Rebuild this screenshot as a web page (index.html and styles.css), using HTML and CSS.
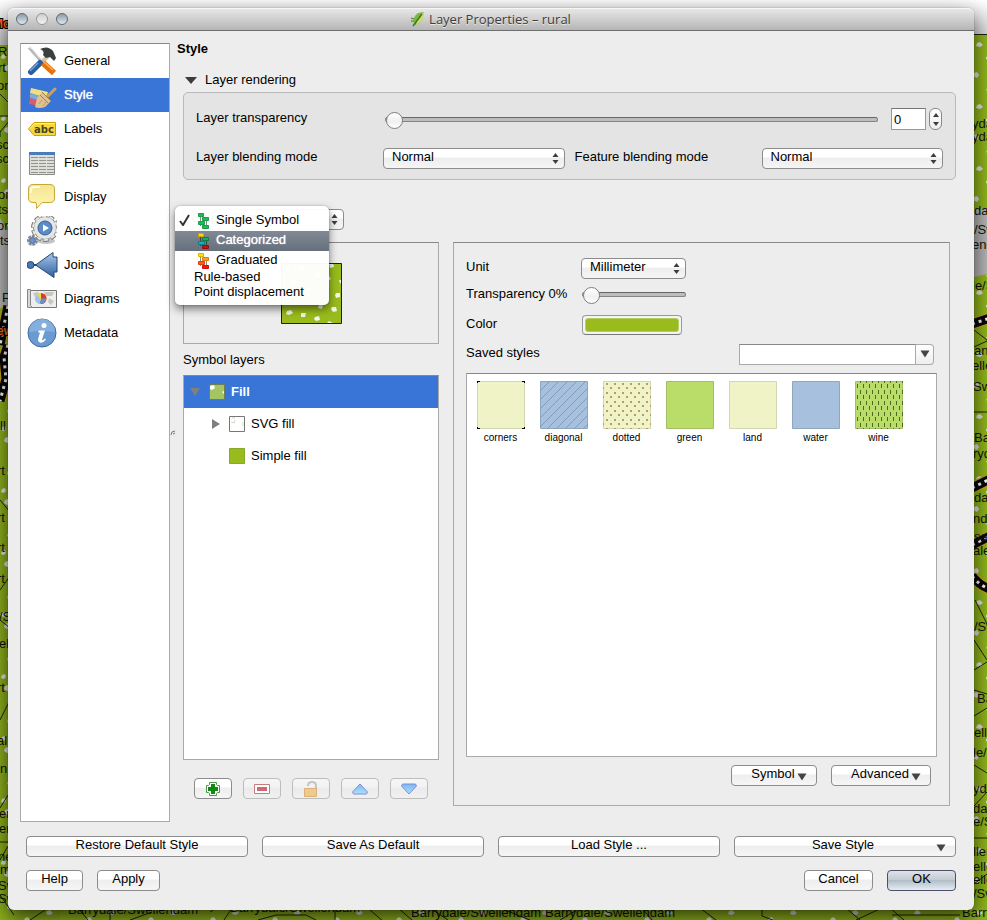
FILE: index.html
```html
<!DOCTYPE html>
<html lang="en">
<head>
<meta charset="utf-8">
<title>Layer Properties – rural</title>
<link rel="stylesheet" href="styles.css">
</head>
<body>
<svg class="map" aria-hidden="true">
  <defs>
    <linearGradient id="chrome" x1="0" y1="0" x2="0" y2="1"><stop offset="0" stop-color="#fff"/><stop offset="1" stop-color="#cfcfcf"/></linearGradient>
    <pattern id="dots" width="62" height="62" patternUnits="userSpaceOnUse">
      <g fill="#e9e9e9">
        <path d="M5 4l3-1 2 2 0 3-3 1-3-2zM26 0l3 1 1 3-3 2-3-2zM44 11l3-1 2 3-2 3-4-2zM17 18l3-1 3 2-1 3-4 0zM58 25l3 0 1 3-2 2-4-2zM33 30l4-1 2 3-3 3-3-2zM8 37l3-1 2 3-2 3-4-2zM47 43l3-1 3 3-3 2-4-1zM25 50l3-1 2 3-2 3-4-2zM56 57l3-1 2 2-2 3-3-2zM2 55l3-1 1 3-2 2-3-1z"/>
      </g>
    </pattern>
  </defs>
  <rect width="100%" height="45" fill="url(#chrome)"/>
  <rect y="45" width="60" height="100%" fill="#8fb31c"/>
  <rect x="60" y="35" width="100%" height="100%" fill="#93b91c"/>
  <rect y="45" width="60" height="100%" fill="url(#dots)"/>
  <rect x="60" y="35" width="100%" height="100%" fill="url(#dots)"/>
  <path d="M0 218l10 16v74H0zM970 210l17-2v66l-17 4z" fill="#b9b9b9"/>
  <g fill="none" stroke="#1c2308">
    <path d="M960 34.500H987M0 116h10M0 132l10-12M0 94l10 10M0 500l10 12M0 590l10-14M0 620l10 8M0 720l10-20M0 808l10-16M0 842h10M0 860l8-14M0 895l14 20M974 347l13-6M974 412h13M974 330l13 10M974 640l13 20M974 670l13-8M974 690l13 4M974 716l13-8M974 765l13 8M974 806l13-14M974 838h13M974 884l13-10M975 600l12 24"/>
    <path d="M30 920l18-12M78 908l10 12M110 908v12M130 920l22-8M210 912l6-4M224 920l8-12M258 920l18-5h30l10 5M335 906v14M370 910l14 12M412 920l-14-12M430 908l18 12M500 908l30 12M560 920l20-12M640 906l12 14M700 908l16 12M762 908v8l16 6M846 908l14 12M856 920l30-14M890 908l14 12M892 915h68"/>
  </g>
  <g fill="none">
    <path d="M8 306L3 330 0 345M8 345l-4 12 2 22-6 22M972 324l18-6M972 488l18-9M972 545l18-9M972 576q8 10 18 13" stroke="#d9a41c" stroke-width="11"/>
    <path d="M8 306L3 330 0 345M8 345l-4 12 2 22-6 22M972 324l18-6M972 488l18-9M972 545l18-9M972 576q8 10 18 13" stroke="#080808" stroke-width="9"/>
    <path d="M8 306L3 330 0 345M8 345l-4 12 2 22-6 22M972 324l18-6M972 488l18-9M972 545l18-9M972 576q8 10 18 13" stroke="#fff" stroke-width="3" stroke-dasharray="3 4"/>
  </g>
  <g class="map-label">
    <text x="-2" y="56">Ro</text><text x="-2" y="72">rt</text><text x="-3" y="90">on</text><text x="-6" y="137">n</text><text x="-4" y="149">sc</text><text x="-4" y="163">sc</text><text x="-2" y="199">or</text><text x="-2" y="214">ts</text><text x="-3" y="230">on</text><text x="0" y="245">ts</text><text x="2" y="302">Pl</text>
    <text x="0" y="430">ll</text><text x="-3" y="475">rt</text><text x="-3" y="522">rt</text><text x="-3" y="552">rt</text><text x="-3" y="583">rt</text><text x="-1" y="621">/Sw</text><text x="-1" y="648">ell</text><text x="-3" y="692">rt</text><text x="-3" y="745">al</text><text x="0" y="773">n</text><text x="-1" y="818">er</text><text x="-1" y="833">er</text><text x="-2" y="861">ne</text><text x="0" y="874">m</text><text x="-2" y="890">Sw</text><text x="-2" y="903">Sw</text>
    <text x="972" y="128">ydale</text><text x="972" y="141">ydale</text><text x="974" y="215">dale</text><text x="974" y="234">/Swel</text><text x="972" y="249">end</text><text x="972" y="290">le/Sw</text><text x="974" y="355">ano</text><text x="972" y="370">elle</text><text x="973" y="391">Swe</text><text x="974" y="442">Barry</text><text x="973" y="458">rydal</text><text x="974" y="502">dale</text><text x="973" y="523">nd</text><text x="974" y="541">sale</text><text x="973" y="555">ale/</text><text x="974" y="631">/Sw</text><text x="977" y="703">Barry</text><text x="974" y="737">elle</text><text x="973" y="757">le/S</text><text x="973" y="793">ydal</text><text x="973" y="813">dale</text><text x="973" y="826">e/Sw</text><text x="973" y="856">llen</text><text x="973" y="871">elle</text><text x="973" y="884">elle</text><text x="973" y="898">/Sw</text>
    <text x="68" y="914">Barrydale/Swellendam</text><text x="230" y="912">Barrydale/Swellendam</text><text x="411" y="917">Barrydale/Swellendam</text><text x="545" y="917">Barrydale/Swellendam</text><text x="962" y="917">Barrydale</text>
  </g>
  <text class="map-town" x="-7" y="28">Mo</text><text class="map-town" x="-3" y="335">ew</text>
</svg>

<svg class="defs" aria-hidden="true">
  <defs>
    <linearGradient id="blue" x1="0" y1="0" x2="0" y2="1"><stop offset="0" stop-color="#a9c8ee"/><stop offset="1" stop-color="#2f5f9e"/></linearGradient>
    <linearGradient id="sky" x1="0" y1="0" x2="0" y2="1"><stop offset="0" stop-color="#7db5f5"/><stop offset="1" stop-color="#aee0ff"/></linearGradient>
    <linearGradient id="yel" x1="0" y1="0" x2="0" y2="1"><stop offset="0" stop-color="#f4e590"/><stop offset="1" stop-color="#fdf6b4"/></linearGradient>
    <symbol id="updown" viewBox="0 0 7 11"><path d="M3.500 0L6.500 4H.500zM3.500 11L6.500 7H.500z" fill="#3c3c3c"/></symbol>
    <symbol id="down" viewBox="0 0 10 8"><path d="M.500 .500h9L5 7.500z" fill="#444"/></symbol>
    <symbol id="sprinkle" viewBox="0 0 60 60">
      <path fill="#f4f6ea" d="M48 1l4-1 1 4-4 1zM45 14l3-1 2 3-3 2zM58 17l3 0v4l-2-1zM55 30l4 0 0 4-4 1-1-3zM38 41l4 1-1 4-4-1zM51 44l4 0 1 4-4 1-2-3zM6 48l4-1 2 3-4 2-3-1zM20 50l5 0-1 4-4 0zM34 54l4-1 1 4-4 1-2-2zM46 60l2-2 4 2zM4 4l4 0 0 4-4 0zM20 3l4 1-1 4-4-1zM10 18l4-1 1 4-4 1zM25 24l4 0 0 4-4 0zM5 33l4 0 0 4-4 0zM35 10l4 0 0 4-4 0z"/>
    </symbol>
  </defs>
</svg>

<div class="window">
  <header class="titlebar">
    <div class="lights"><button class="light" aria-label="Close"></button><button class="light light-off" aria-label="Minimize"></button><button class="light" aria-label="Zoom"></button></div>
    <h1 class="title">
      <svg width="14" height="16" viewBox="0 0 14 16" aria-hidden="true"><path d="M13 1Q5 1 3 7q-1 4 1 7l3-1q5-3 6-12z" fill="#7db83e"/><path d="M13 1Q7 5 5 14l3-2q5-4 5-11z" fill="#d4df6a"/><path d="M11 3L2 15" stroke="#3f7a28" stroke-width="1.500"/><path d="M0 7l3 1M0 10l3 0" stroke="#3f7a28"/></svg>
      Layer Properties – rural
    </h1>
  </header>

  <div class="content">
    <main class="main">
      <nav class="sidebar" aria-label="Sections">
        <button class="nav-item">
          <svg width="30" height="30" viewBox="0 0 30 30"><path d="M2 1.500L13 14" stroke="#b9b9b9" stroke-width="3"/><path d="M1.500 1l4 2 7 9" stroke="#eee" fill="none"/><path d="M24 7L12 19" stroke="#d8c39c" stroke-width="4"/><path d="M4 26L13 17" stroke="#2c5e9e" stroke-width="6" stroke-linecap="round"/><path d="M3 25l8-8" stroke="#7aa5d8" stroke-width="1.500"/><path d="M16 17L27 27" stroke="#e8710c" stroke-width="6"/><path d="M17 16l9 8" stroke="#ffab55" stroke-width="1.500"/><path d="M13 3q8-4 13 2l3 7-2 3-4-4-4 1-3-3q2-4-3-6z" fill="#3a403f"/></svg>
          General</button>
        <button class="nav-item nav-active" aria-current="page">
          <svg width="30" height="30" viewBox="0 0 30 30"><path d="M4 8l17 4-2 6L3 13z" fill="#efe07e"/><path d="M3 13l16 5-2 4-14-4z" fill="#7fa8dd"/><path d="M3 18l14 4-3 4-12-2z" fill="#db5c68"/><path d="M28 9L20 17" stroke="#c9a063" stroke-width="3" stroke-linecap="round"/><path d="M15 12l9 9-6 6q-6 2-10 0l2-9z" fill="#dfc091"/><path d="M15 12l9 9M13 15l8 8" stroke="#a57e4b"/><path d="M12 24l3-4M16 26l3-4" stroke="#c29c68"/></svg>
          Style</button>
        <button class="nav-item">
          <svg width="30" height="30" viewBox="0 0 30 30"><path d="M1.500 15L7 8.500h21.500v13H7z" fill="#f5d93a" stroke="#c79f0e"/><path d="M3 14.500l4.500-5H27.500" stroke="#fff0a0" fill="none"/><text x="7" y="19" class="abc">abc</text></svg>
          Labels</button>
        <button class="nav-item">
          <svg width="30" height="30" viewBox="0 0 30 30"><path d="M2.500 4.500h25v22h-25z" fill="#dedfd9" stroke="#8b8d89"/><path d="M2 4h26v3H2z" fill="#4a7bbb"/><path d="M4 9.500h7m1 0h7m1 0h7M4 12.500h7m1 0h7m1 0h7M4 15.500h7m1 0h7m1 0h7M4 18.500h7m1 0h7m1 0h7M4 21.500h7m1 0h7m1 0h7M4 24.500h7m1 0h7m1 0h7" stroke="#92948f"/></svg>
          Fields</button>
        <button class="nav-item">
          <svg width="30" height="30" viewBox="0 0 30 30"><path d="M6 2.500h17q4.500 0 4.500 4.500v9q0 4.500-4.500 4.500H15L9.500 26.500Q10 23 9 20.500H6Q1.500 20.500 1.500 16V7Q1.500 2.500 6 2.500z" fill="url(#yel)" stroke="#c8a73a"/><path d="M4 11V8q0-3 3-3h6" stroke="#fffde0" stroke-width="2" fill="none"/></svg>
          Display</button>
        <button class="nav-item">
          <svg width="30" height="30" viewBox="0 0 30 30"><ellipse cx="19" cy="25" rx="9" ry="3" fill="#c4c4c4"/><circle cx="18" cy="12" r="12" fill="none" stroke="#777" stroke-width="4" stroke-dasharray="5 2.540"/><circle cx="18" cy="12" r="11.500" fill="#e6e6e6" stroke="#888"/><circle cx="18" cy="12" r="12" fill="none" stroke="#e6e6e6" stroke-width="2" stroke-dasharray="4 3.540" stroke-dashoffset="-.500"/><circle cx="18" cy="12" r="7" fill="#5a8cc9" stroke="#3c5e8a"/><path d="M16 8.500l6 3.500-6 3.500z" fill="#fff"/><circle cx="5.500" cy="24.500" r="4.500" fill="#e8e8e8" stroke="#888" stroke-width="2" stroke-dasharray="3 1"/><circle cx="5.500" cy="24.500" r="3" fill="#6795cf" stroke="#47689a"/></svg>
          Actions</button>
        <button class="nav-item">
          <svg width="32" height="30" viewBox="0 0 32 30"><path d="M2 15h8" stroke="#24466f" stroke-width="2"/><circle cx="3.500" cy="15" r="3.500" fill="#4a7ab5" stroke="#24466f"/><path d="M8.500 15L26 2.500V7h4v15h-3v5.500z" fill="url(#blue)" stroke="#24466f"/></svg>
          Joins</button>
        <button class="nav-item">
          <svg width="30" height="30" viewBox="0 0 30 30"><path d="M3.500 6.500h26v17h-26z" fill="#eee" stroke="#777"/><path d="M6 9l5-1 2 3-4 4zM17 8h10l-2 4-6 0zM22 14l5 3-3 4-3-3z" fill="#c3c9c0"/><path d="M.500 5.500h3v16l2 2h-5z" fill="#d7d7d7" stroke="#888"/><circle cx="14" cy="14.500" r="5.500" fill="#f3d54a"/><path d="M14 14.500V9A5.500 5.500 0 0 1 14 20z" fill="#db3b30"/><path d="M14 14.500h5.500a5.500 5.500 0 0 1-7 5z" fill="#5d93d6"/><path d="M13 14.500v5.500a5.500 5.500 0 0 1-5-5.500l2-4z" fill="#9fc2ea"/></svg>
          Diagrams</button>
        <button class="nav-item">
          <svg width="30" height="30" viewBox="0 0 30 30"><circle cx="15" cy="15" r="14" fill="#699bd2" stroke="#41699c"/><path d="M2 14a13 13 0 0 1 26 0q-13-2-26 0z" fill="#84aedb"/><circle cx="17" cy="7.500" r="2.500" fill="#fff"/><path d="M12 12.500h6l-3 9q0 2 3-1l1 1q-3 4-6 3-3-1-1.500-5l1.500-5h-2z" fill="#fff"/></svg>
          Metadata</button>
      </nav>

      <svg class="grip" width="7" height="6" viewBox="0 0 7 6" aria-hidden="true"><path d="M1 5l1-3 3-1M3 4l2-1" stroke="#777" fill="none"/></svg>

      <section class="pane">
        <h2 class="pane-title">Style</h2>
        <div class="pane-body">
          <button class="disclosure" aria-expanded="true"><svg width="12" height="8" viewBox="0 0 12 8"><path d="M0 1h12L6 8z" fill="#3c3c3c"/></svg>Layer rendering</button>
          <div class="group">
            <label for="layer-tr">Layer transparency</label>
            <div class="tr-row">
              <input id="layer-tr" class="slider" type="range" min="0" max="100" value="0">
              <input class="spin" type="text" value="0" aria-label="Transparency value">
              <button class="stepper" aria-label="Step value"><svg width="6" height="13" viewBox="0 0 6 13"><path d="M3 0l3 4H0zM3 13l3-4H0z" fill="#3c3c3c"/></svg></button>
            </div>
            <label for="layer-blend">Layer blending mode</label>
            <div class="combo"><select id="layer-blend"><option>Normal</option></select><svg width="7" height="11"><use href="#updown"/></svg></div>
            <label for="feature-blend" class="second">Feature blending mode</label>
            <div class="combo"><select id="feature-blend"><option>Normal</option></select><svg width="7" height="11"><use href="#updown"/></svg></div>
          </div>

          <div class="renderer">
            <div class="combo"><select aria-label="Renderer"><option>Single Symbol</option></select><svg width="7" height="11"><use href="#updown"/></svg></div>
            <div class="menu" role="listbox" aria-label="Renderer">
              <button class="option" role="option" aria-selected="true"><svg width="12" height="12" viewBox="0 0 12 12"><path d="M1 7l3 4 6-10" stroke="#333" stroke-width="2" fill="none"/></svg>
                <svg class="kind" width="12" height="16" viewBox="0 0 12 16"><path d="M2.500 3v10M8.500 5v9" stroke="#888"/><path d="M.500 .500h5v3h-5zM4.500 4.500h6v3h-6zM.500 8.500h6v3h-6zM4.500 12.500h6v3h-6z" fill="#12c257" stroke="#1a9c4b"/></svg>Single Symbol</button>
              <button class="option option-hot" role="option"><span></span>
                <svg class="kind" width="12" height="16" viewBox="0 0 12 16"><path d="M2.500 3v10M8.500 5v9" stroke="#444"/><path d="M.500 .500h5v3h-5z" fill="#ffd21a" stroke="#d6a400"/><path d="M4.500 4.500h6v3h-6z" fill="#12b257" stroke="#127a3b"/><path d="M.500 8.500h6v3h-6z" fill="#12b2c2" stroke="#137a8a"/><path d="M4.500 12.500h6v3h-6z" fill="#c21212" stroke="#8c1010"/></svg>Categorized</button>
              <button class="option" role="option"><span></span>
                <svg class="kind" width="12" height="16" viewBox="0 0 12 16"><path d="M2.500 3v10M8.500 5v9" stroke="#888"/><path d="M.500 .500h5v3h-5z" fill="#ffe01a" stroke="#d6b400"/><path d="M4.500 4.500h6v3h-6z" fill="#ffa01a" stroke="#d67f10"/><path d="M.500 8.500h6v3h-6z" fill="#ff5a1a" stroke="#d04510"/><path d="M4.500 12.500h6v3h-6z" fill="#ff1212" stroke="#d01010"/></svg>Graduated</button>
              <button class="option option-plain" role="option">Rule-based</button>
              <button class="option option-plain" role="option">Point displacement</button>
            </div>
          </div>

          <div class="columns">
            <div class="symbol-col">
              <div class="preview"><svg width="61" height="61" viewBox="0 0 61 61"><path d="M.500 .500h60v60H.500z" fill="#99bb1d"/><use href="#sprinkle" width="60" height="60"/><path d="M.500 .500h60v60H.500z" fill="none" stroke="#1d2408"/></svg></div>
              <h3 class="caption">Symbol layers</h3>
              <ul class="tree">
                <li class="tree-row tree-active"><svg width="10" height="8" viewBox="0 0 10 8"><path d="M0 0h10L5 8z" fill="#808080"/></svg><svg width="16" height="16" viewBox="0 0 16 16"><path d="M.500 .500h15v15H.500z" fill="#a3c562" stroke="#6d7f55"/><path d="M1 2l4-1 1 3-3 2-2-1zM13 8l2-1v3z" fill="#fff"/></svg>Fill</li>
                <li class="tree-row tree-child"><svg width="9" height="10" viewBox="0 0 9 10"><path d="M1 0v10L9 5z" fill="#808080"/></svg><svg width="16" height="16" viewBox="0 0 16 16"><path d="M.500 .500h15v15H.500z" fill="#fff" stroke="#777"/><path d="M2 6l3 1 1-3M14 6v4M3 2h3" stroke="#c9dcc0" fill="none"/></svg>SVG fill</li>
                <li class="tree-row tree-child"><span class="no-arrow"></span><svg width="16" height="16" viewBox="0 0 16 16"><path d="M.500 .500h15v15H.500z" fill="#99bb1d" stroke="#8aa82a"/></svg>Simple fill</li>
              </ul>
              <div class="tools">
                <button class="btn" aria-label="Add symbol layer"><svg width="16" height="16" viewBox="0 0 16 16"><path d="M4.500 1.500h7v2l1 1h2v7h-2l-1 1v2h-7v-2l-1-1h-2v-7h2l1-1z" fill="#fff" stroke="#4a9a4a"/><path d="M8 3v10M3 8h10" stroke="#0f8a12" stroke-width="4"/></svg></button>
                <button class="btn btn-off" aria-label="Remove symbol layer"><svg width="16" height="16" viewBox="0 0 16 16"><path d="M.500 3.500h15v9H.500z" fill="#fff" stroke="#c47c80"/><path d="M3 6h10v4H3z" fill="#cf6a70"/></svg></button>
                <button class="btn btn-off" aria-label="Lock colour"><svg width="16" height="16" viewBox="0 0 16 16"><path d="M5 5q0-4 4-4 4 0 4 4v3" fill="none" stroke="#c4c4c4" stroke-width="2"/><path d="M1.500 7.500h12v8h-12z" fill="#f0c98c" stroke="#dcb27a"/></svg></button>
                <button class="btn btn-off" aria-label="Move up"><svg width="16" height="12" viewBox="0 0 16 12"><path d="M8 1l7.500 8-1 2h-13l-1-2z" fill="url(#sky)" stroke="#7b92cf"/></svg></button>
                <button class="btn btn-off" aria-label="Move down"><svg width="16" height="12" viewBox="0 0 16 12"><path d="M8 11L.500 3l1-2h13l1 2z" fill="url(#sky)" stroke="#7b92cf"/></svg></button>
              </div>
            </div>

            <div class="style-box">
              <div class="form">
                <label for="unit">Unit</label>
                <div class="combo short"><select id="unit"><option>Millimeter</option></select><svg width="7" height="11"><use href="#updown"/></svg></div>
                <label for="sym-tr">Transparency 0%</label>
                <div class="short slider-cell"><input id="sym-tr" class="slider" type="range" min="0" max="100" value="0"></div>
                <label for="color">Color</label>
                <button id="color" class="color-btn" aria-label="Color"><span></span></button>
                <label for="saved">Saved styles</label>
                <div class="editable"><input id="saved" type="text"><button aria-label="Show saved styles"><svg width="10" height="8"><use href="#down"/></svg></button></div>
              </div>
              <ul class="swatches">
                <li><svg width="48" height="48" viewBox="0 0 48 48"><path d="M.500 .500h47v47H.500z" fill="#f0f3c6" stroke="#d3d7b2"/><path d="M0 2V0h3M45 0h3v2M0 46v2h3M45 48h3v-2" fill="none" stroke="#000" stroke-width="2"/></svg>corners</li>
                <li><svg width="48" height="48" viewBox="0 0 48 48"><path d="M.500 .500h47v47H.500z" fill="#a6c0de" stroke="#8ea7bd"/><path d="M0 10L10 0M0 19L19 0M0 28L28 0M0 37L37 0M0 46L46 0M7 48L48 7M16 48L48 16M25 48L48 25M34 48L48 34M43 48l5-5" stroke="#7f9db8"/></svg>diagonal</li>
                <li><svg width="48" height="48" viewBox="0 0 48 48"><defs><pattern id="dotted" width="8" height="9" patternUnits="userSpaceOnUse"><path d="M3 2h2v2H3zM7 6h1v2H7zM0 6h1v2H0z" fill="#b39f6c"/></pattern></defs><path d="M.500 .500h47v47H.500z" fill="#f0f3c6" stroke="#d3d7b2"/><path d="M0 0h48v48H0z" fill="url(#dotted)"/></svg>dotted</li>
                <li><svg width="48" height="48" viewBox="0 0 48 48"><path d="M.500 .500h47v47H.500z" fill="#badd69" stroke="#a2bf68"/></svg>green</li>
                <li><svg width="48" height="48" viewBox="0 0 48 48"><path d="M.500 .500h47v47H.500z" fill="#f0f3c6" stroke="#d3d7b2"/></svg>land</li>
                <li><svg width="48" height="48" viewBox="0 0 48 48"><path d="M.500 .500h47v47H.500z" fill="#a6c0de" stroke="#8ea7bd"/></svg>water</li>
                <li><svg width="48" height="48" viewBox="0 0 48 48"><defs><pattern id="wine" width="6" height="11" patternUnits="userSpaceOnUse"><path d="M2.500 3v4M5.500 9v2M5.500 0v2" stroke="#4c6a22"/></pattern></defs><path d="M.500 .500h47v47H.500z" fill="#badd69" stroke="#a2bf68"/><path d="M0 0h48v48H0z" fill="url(#wine)"/></svg>wine</li>
              </ul>
              <div class="box-actions">
                <button class="btn">Symbol<svg width="10" height="8"><use href="#down"/></svg></button>
                <button class="btn">Advanced<svg width="10" height="8"><use href="#down"/></svg></button>
              </div>
            </div>
          </div>
        </div>
      </section>
    </main>

    <div class="style-actions">
      <button class="btn">Restore Default Style</button>
      <button class="btn">Save As Default</button>
      <button class="btn">Load Style ...</button>
      <button class="btn btn-menu">Save Style<svg width="10" height="8"><use href="#down"/></svg></button>
    </div>
    <footer class="dialog-actions">
      <button class="btn help">Help</button>
      <button class="btn apply">Apply</button>
      <button class="btn wide cancel">Cancel</button>
      <button class="btn wide btn-default">OK</button>
    </footer>
  </div>
</div>
</body>
</html>
```

FILE: styles.css
```css
* { box-sizing: border-box; }

body {
  margin: 0;
  min-height: 100vh;
  padding: 8px 13px 10px 8px;
  display: flex;
  position: relative;
  overflow-x: hidden;
  background: #8fb31c;
  color: #000;
  font: 13px/16px "Liberation Sans", Arial, sans-serif;
}

button, input, select { font: inherit; color: inherit; margin: 0; }
button { cursor: default; }
svg { display: block; flex: none; }
h1, h2, h3, ul { margin: 0; padding: 0; font: inherit; list-style: none; }

.defs { position: absolute; width: 0; height: 0; }
.map { position: absolute; inset: 0; width: 100%; height: 100%; }
.map-label { font-size: 13px; fill: #10140a; }
.map-town { font-size: 12px; font-weight: bold; fill: #ff6a10; stroke: #000; stroke-width: 2px; paint-order: stroke; }

.window {
  position: relative;
  flex: 1;
  display: flex;
  flex-direction: column;
  min-width: 0;
  border-radius: 6px;
  background: #ededed;
  box-shadow: 0 0 1px rgba(0, 0, 0, .6), 0 8px 22px rgba(0, 0, 0, .7);
}

.titlebar {
  height: 23px;
  display: grid;
  grid-template-columns: 80px 1fr 80px;
  align-items: center;
  border-bottom: 1px solid #6e6e6e;
  border-radius: 6px 6px 0 0;
  background: linear-gradient(#e9e9e9, #b5b5b5);
  box-shadow: inset 0 1px #f6f6f6;
}
.lights { display: flex; gap: 8px; padding-left: 8px; }
.light {
  width: 12px;
  height: 12px;
  padding: 0;
  border: 1px solid #5e6a76;
  border-radius: 50%;
  background: linear-gradient(#8f9ba8, #dfe8ef);
}
.light-off { border-color: #969696; background: linear-gradient(#cfcfcf, #f2f2f2); }
.title {
  display: flex;
  justify-content: center;
  align-items: center;
  gap: 4px;
  color: #3d3d3d;
  font-family: "Open Sans", "Liberation Sans", sans-serif;
  white-space: nowrap;
  text-shadow: 0 1px #e8e8e8;
}

.content { flex: 1; display: flex; flex-direction: column; padding: 12px 18px 19px 12px; }
.main { flex: 1; display: flex; }

.sidebar { width: 150px; flex: none; border: 1px solid #aaa; border-top-color: #888; background: #fff; }
.nav-item {
  width: 100%;
  height: 34px;
  display: grid;
  grid-template-columns: 30px 1fr;
  column-gap: 7px;
  align-items: center;
  padding: 0 0 0 6px;
  border: 0;
  background: none;
  text-align: left;
}
.nav-active { background: #3875d7; color: #fff; text-shadow: 0 0 1px #fff; }
.abc { font: bold 10px "DejaVu Sans", sans-serif; fill: #4a4326; }
.grip { align-self: center; }

.pane { flex: 1; min-width: 0; display: flex; flex-direction: column; }
.pane-title { font-weight: bold; line-height: 12px; }
.pane-body { flex: 1; display: flex; flex-direction: column; padding: 16px 0 16px 6px; }
.disclosure { align-self: flex-start; display: flex; align-items: center; gap: 8px; height: 18px; padding: 0 2px; border: 0; background: none; }

.group {
  display: grid;
  grid-template-columns: 187px 1fr 197px 1fr;
  grid-template-rows: 22px 21px;
  row-gap: 18px;
  align-items: center;
  margin-top: 3px;
  padding: 15px 12px 10px;
  border: 1px solid #b9b9b9;
  border-radius: 5px;
  background: #e4e4e4;
}
.group label, .form label { padding-bottom: 3px; }
.group label.second { padding-left: 10px; }
.tr-row { grid-column: 2 / 5; display: flex; align-items: center; gap: 3px; padding: 0 1px 0 2px; }
.tr-row .slider { flex: 1; margin-right: 10px; }
.spin { width: 35px; height: 22px; padding: 0 2px; border: 1px solid #999; border-top-color: #777; background: #fff; outline: 0; }
.stepper { width: 13px; height: 22px; display: grid; place-items: center; padding: 0; border: 1px solid #888; border-radius: 6px; background: linear-gradient(#fff, #eee); }

.combo { position: relative; min-width: 0; }
.combo select {
  display: block;
  width: 100%;
  height: 21px;
  padding: 0 20px 5px 8px;
  appearance: none;
  border: 1px solid #8c8c8c;
  border-radius: 4px;
  background: linear-gradient(#fff, #fff 40%, #eee 50%, #f5f5f5);
  outline: 0;
}
.combo svg { position: absolute; right: 6px; top: 5px; pointer-events: none; }

.slider { appearance: none; display: block; width: 100%; min-width: 0; height: 18px; background: none; }
.slider::-webkit-slider-runnable-track { height: 5px; border: 1px solid #858585; border-top-color: #666; border-radius: 3px; background: #bdbdbd; }
.slider::-webkit-slider-thumb { appearance: none; width: 17px; height: 17px; margin-top: -6px; border: 1px solid #808080; border-radius: 50%; background: linear-gradient(#fff, #f0f0f0 60%, #fff); }

.renderer { position: relative; width: 161px; margin-top: 29px; }
.menu {
  position: absolute;
  z-index: 2;
  left: -8px;
  top: -3px;
  width: 154px;
  padding: 5px 0 4px;
  border-radius: 5px;
  background: rgba(255, 255, 255, .97);
  box-shadow: 0 0 1px rgba(0, 0, 0, .7), 0 4px 9px rgba(0, 0, 0, .5);
}
.option {
  width: 100%;
  height: 20px;
  display: grid;
  grid-template-columns: 14px 13px 1fr;
  column-gap: 5px;
  align-items: center;
  padding: 0 0 4px 4px;
  border: 0;
  background: none;
  text-align: left;
  white-space: nowrap;
}
.option .kind { margin-top: 2px; }
.option-hot { background: linear-gradient(#808994, #66707c); color: #fff; text-shadow: 0 0 1px #fff; }
.option-plain { display: block; height: 15px; padding: 0 0 3px 19px; line-height: 12px; }

.columns { flex: 1; display: grid; grid-template-columns: 256px 1fr; gap: 14px; margin: 12px 6px 0 0; }
.symbol-col { display: flex; flex-direction: column; padding-bottom: 7px; }
.preview { height: 102px; display: grid; place-items: center; border: 1px solid #aaa; border-top-color: #888; }
.caption { padding: 8px 0 7px; }
.tree { flex: 1; border: 1px solid #aaa; border-top-color: #888; background: #fff; }
.tree-row { height: 32px; display: flex; align-items: center; gap: 6px; padding: 0 0 0 6px; }
.tree-row svg:first-child, .no-arrow { margin-right: 3px; }
.no-arrow { width: 9px; }
.tree-child { padding-left: 27px; }
.tree-active { background: #3875d7; color: #fff; font-weight: bold; }
.tools { display: flex; gap: 11px; padding: 18px 0 0 11px; }
.tools .btn { width: 38px; padding: 0; }

.btn {
  height: 21px;
  min-width: 0;
  display: flex;
  justify-content: center;
  align-items: center;
  padding: 0 8px 3px;
  border: 1px solid #8c8c8c;
  border-radius: 4px;
  background: linear-gradient(#fff, #fff 40%, #eee 50%, #f6f6f6);
  white-space: nowrap;
}
.btn-off { border-color: #bdbdbd; background: linear-gradient(#f6f6f6, #f2f2f2 40%, #ebebeb 50%, #f0f0f0); }

.style-box { min-width: 0; display: flex; flex-direction: column; padding: 12px 12px 19px; border: 1px solid #aaa; border-top-color: #888; }
.form { display: grid; grid-template-columns: 115px 1fr; grid-template-rows: 26px 28px 32px 26px; align-items: center; }
.short { width: 105px; }
.slider-cell { padding: 0 0 2px 1px; }
.color-btn { width: 100px; height: 20px; margin-left: 1px; padding: 2px; border: 1px solid #999; border-bottom-color: #777; border-radius: 4px; background: #f4f4f4; }
.color-btn span { display: block; height: 100%; border: 1px solid #b5cf62; border-radius: 3px; background: #99bb1d; }
.editable { justify-self: end; width: 195px; height: 21px; display: flex; margin-right: 3px; }
.editable input { flex: 1; min-width: 0; border: 1px solid #aaa; border-top-color: #888; background: #fff; outline: 0; }
.editable button { width: 18px; display: grid; place-items: center; padding: 0; border: 1px solid #aaa; border-left: 0; border-radius: 0 4px 4px 0; background: linear-gradient(#fff, #eee); }

.swatches {
  flex: 1;
  display: flex;
  flex-wrap: wrap;
  align-content: flex-start;
  margin-top: 6px;
  padding: 7px 2px;
  border: 1px solid #aaa;
  border-top-color: #888;
  background: #fff;
}
.swatches li { width: 63px; display: flex; flex-direction: column; align-items: center; gap: 2px; font-size: 10px; line-height: 14px; }

.box-actions { display: flex; justify-content: flex-end; gap: 14px; padding: 8px 6px 0 0; }
.box-actions .btn { width: 100px; gap: 2px; padding-left: 18px; }
.box-actions .btn:first-child { width: 86px; }
.box-actions svg { margin-top: 5px; }

.style-actions { display: grid; grid-template-columns: repeat(4, 1fr); gap: 14px; margin: 14px 0 13px 6px; }
.btn-menu { position: relative; padding-right: 12px; }
.btn-menu svg { position: absolute; right: 9px; top: 7px; }
.dialog-actions { display: flex; gap: 14px; margin-left: 6px; }
.help { width: 57px; }
.apply { width: 63px; }
.wide { width: 69px; }
.cancel { margin-left: auto; }
.btn-default { border-color: #4c4f66; background: linear-gradient(#dfe3e8, #c3cbd4 45%, #b2bdc8 50%, #e4edf3); }
```
